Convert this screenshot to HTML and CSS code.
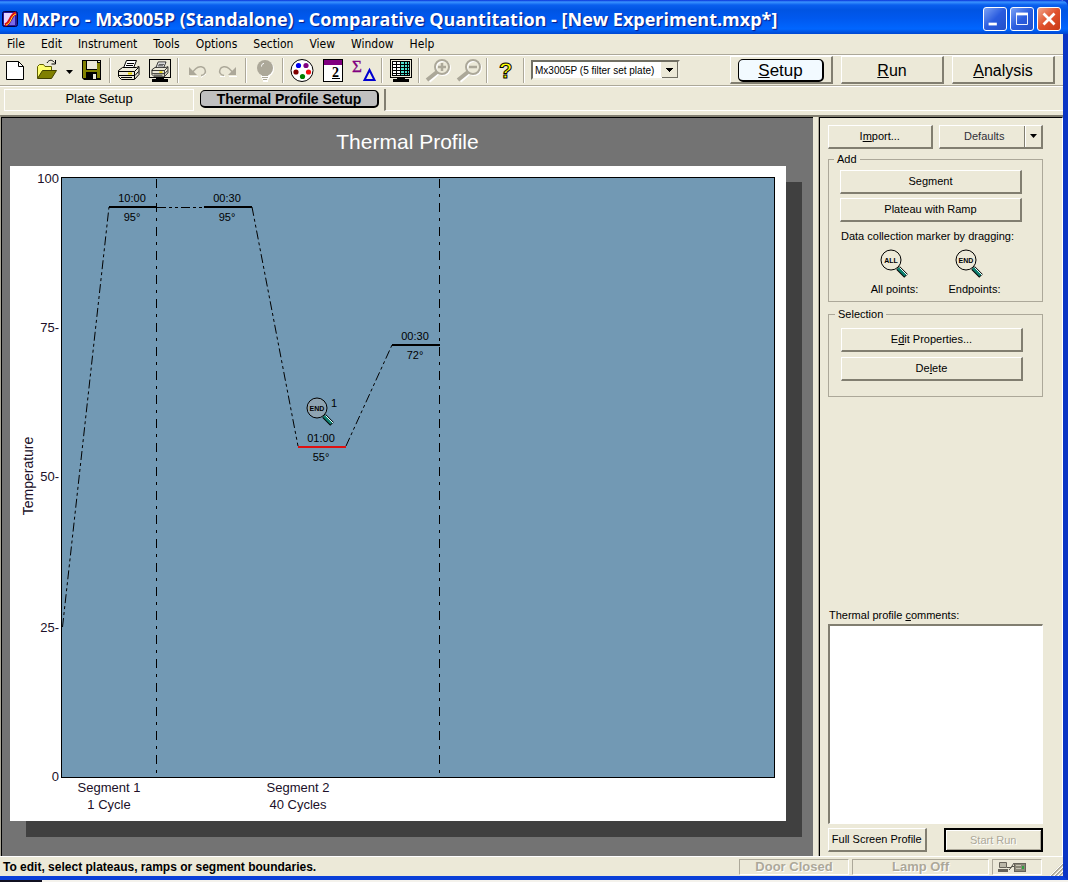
FILE: index.html
```html
<!DOCTYPE html>
<html lang="en">
<head>
<meta charset="utf-8">
<title>MxPro - Mx3005P (Standalone)</title>
<link rel="stylesheet" href="styles.css">
</head>
<body>
<div class="window">
  <header class="titlebar">
    <svg class="app-icon" viewBox="0 0 16 16" aria-hidden="true">
      <rect x=".5" y=".5" width="15" height="15" rx="2" fill="#2a1a9a" stroke="#000040"/>
      <path d="M2 2H12L4 14H2Z" fill="#e4d4ff"/><path d="M13 4V14H7Z" fill="#7a6aea"/>
      <path d="M3 14C9 12 7 5 14 2" stroke="#e01010" stroke-width="3" fill="none"/>
      <path d="M4 14C10 12 8 5 14 3" stroke="#ffe820" stroke-width="1" fill="none"/>
    </svg>
    <h1 class="title">MxPro - Mx3005P (Standalone) - Comparative Quantitation - [New Experiment.mxp*]</h1>
    <div class="caption-buttons">
      <button class="cap" aria-label="Minimize"><svg viewBox="0 0 24 24"><rect x="5" y="16" width="9" height="3" fill="#fff"/></svg></button>
      <button class="cap" aria-label="Maximize"><svg viewBox="0 0 24 24"><path d="M6 6.500H18V18H6Z" fill="none" stroke="#fff"/><rect x="5.500" y="5" width="13" height="3" fill="#fff"/></svg></button>
      <button class="cap cap-close" aria-label="Close"><svg viewBox="0 0 24 24"><path d="M6 6L18 18M18 6L6 18" stroke="#fff" stroke-width="3"/></svg></button>
    </div>
  </header>

  <nav class="menubar">
    <button>File</button><button>Edit</button><button>Instrument</button><button>Tools</button><button>Options</button><button>Section</button><button>View</button><button>Window</button><button>Help</button>
  </nav>

  <div class="toolbar">
    <button class="tool" aria-label="New"><svg viewBox="0 0 25 24"><path d="M3.500 3.500H15.500L20.500 8.500V21.500H3.500Z" fill="#fff" stroke="#000"/><path d="M15.500 3.500V8.500H20.500" fill="none" stroke="#000"/></svg></button>
    <button class="tool" aria-label="Open"><svg viewBox="0 0 25 24"><path d="M3.500 20V8.500L5.500 6.500H9.500L11 8.500H17.500V12" fill="#ffff70" stroke="#606000"/><path d="M3.500 20.500L8.500 12.500H22.500L17.500 20.500Z" fill="#808000" stroke="#404000"/><path d="M13 5C15 1.500 18 1.500 20.500 4.500M21.500 2V6H17.500" fill="none" stroke="#000"/></svg></button>
    <button class="tool tool-drop" aria-label="Recent files"><svg viewBox="0 0 14 24"><path d="M4 12H11L7.500 16Z"/></svg></button>
    <button class="tool" aria-label="Save"><svg viewBox="0 0 25 24"><path d="M3 2H22V22H5L3 20Z" fill="#000"/><rect x="4" y="3" width="3" height="17" fill="#808000"/><rect x="18" y="5" width="3" height="15" fill="#808000"/><rect x="7" y="12" width="12" height="2" fill="#808000"/><rect x="8" y="3" width="10" height="8" fill="#ece9d8"/><rect x="14" y="16" width="3" height="5" fill="#ece9d8"/><rect x="19" y="3" width="2" height="1" fill="#ece9d8"/></svg></button>
    <span class="sep"></span>
    <button class="tool" aria-label="Print"><svg viewBox="0 0 25 24"><use href="#printer"/></svg></button>
    <button class="tool" aria-label="Print preview"><svg viewBox="0 0 25 24"><rect x="2.500" y="1.500" width="21" height="18" fill="#ece9d8" stroke="#000"/><g transform="translate(3 2) scale(.78)"><use href="#printer"/></g><path d="M9 20H17V21H21V24H5V21H9Z"/></svg></button>
    <span class="sep"></span>
    <button class="tool" aria-label="Undo" disabled><svg viewBox="0 0 25 24"><path d="M6 18.500H14M17 19.500L22 16" stroke="#fff"/><g transform="translate(26 0) scale(-1 1)"><use href="#arrow"/></g></svg></button>
    <button class="tool" aria-label="Redo" disabled><svg viewBox="0 0 25 24"><path d="M14 18.500H22M5 18.500H10" stroke="#fff"/><use href="#arrow"/></svg></button>
    <span class="sep"></span>
    <button class="tool" aria-label="Light" disabled><svg viewBox="0 0 25 24"><path d="M9 18.500H18M10 20.500H17M11 23H16" stroke="#fff" stroke-width="2"/><circle cx="14" cy="11" r="8" fill="#fff"/><circle cx="13" cy="10" r="8" fill="#aca899"/><path d="M10 17H16V18H10ZM10 19H16V20H10ZM11 21H15V22H11Z" fill="#aca899"/><path d="M9.500 8.500C9.500 6.500 10.500 5.500 12 5.500" fill="none" stroke="#fff"/></svg></button>
    <span class="sep"></span>
    <button class="tool" aria-label="Plate dyes"><svg viewBox="0 0 25 24"><circle cx="13" cy="12.500" r="11" fill="#fff" stroke="#000"/><circle cx="9.500" cy="7.500" r="2.600" fill="#0000f0"/><circle cx="17" cy="7.500" r="2.600" fill="#800080"/><circle cx="7" cy="14" r="2.600" fill="#800000"/><circle cx="19.500" cy="14" r="2.600" fill="#f01010"/><circle cx="13.500" cy="18.500" r="2.600" fill="#008000"/></svg></button>
    <button class="tool" aria-label="Replicates"><svg viewBox="0 0 25 24"><rect x="3.500" y="1.500" width="19" height="22" fill="#fff" stroke="#000"/><rect x="4" y="2" width="18" height="5" fill="#800080"/><text x="12" y="19" class="ic-two">2</text><path d="M12 20.500H20" stroke="#000"/></svg></button>
    <button class="tool" aria-label="Summary"><svg viewBox="0 0 25 24"><text x="1" y="14" class="ic-sigma">Σ</text><path d="M18.500 12L23.500 22H13.500Z" fill="none" stroke="#0000d0" stroke-width="2"/></svg></button>
    <span class="sep"></span>
    <button class="tool" aria-label="Plate view"><svg viewBox="0 0 25 24"><rect x="2.500" y="1.500" width="21" height="18" fill="#ece9d8" stroke="#000"/><rect x="4" y="3" width="18" height="15" fill="#000"/><rect x="5" y="4" width="16" height="13" fill="#50e0d0"/><rect x="5" y="4" width="8" height="13" fill="#fff"/><path d="M8.500 4V17M12.500 4V17M16.500 4V17M19.500 4V17M5 6.500H21M5 9.500H21M5 12.500H21M5 15.500H21" stroke="#000"/><path d="M9 20H17V21H21V24H5V21H9Z"/></svg></button>
    <span class="sep"></span>
    <button class="tool" aria-label="Zoom in" disabled><svg viewBox="0 0 25 24"><path d="M4 23L13 15" stroke="#fff" stroke-width="4"/><circle cx="18" cy="10" r="7" fill="none" stroke="#fff" stroke-width="2"/><circle cx="17" cy="9" r="7" fill="none" stroke="#aca899" stroke-width="2"/><path d="M13 9H21M17 5V13" stroke="#aca899" stroke-width="2.500"/><path d="M2 22L12 14" stroke="#aca899" stroke-width="4"/></svg></button>
    <button class="tool" aria-label="Zoom out" disabled><svg viewBox="0 0 25 24"><path d="M4 23L13 15" stroke="#fff" stroke-width="4"/><circle cx="18" cy="10" r="7" fill="none" stroke="#fff" stroke-width="2"/><circle cx="17" cy="9" r="7" fill="none" stroke="#aca899" stroke-width="2"/><path d="M13 9H21" stroke="#aca899" stroke-width="2.500"/><path d="M2 22L12 14" stroke="#aca899" stroke-width="4"/></svg></button>
    <span class="sep"></span>
    <button class="tool" aria-label="Help"><svg viewBox="0 0 25 24"><text x="6" y="20" class="ic-help">?</text></svg></button>
    <span class="sep"></span>
    <select class="instrument" aria-label="Instrument"><option>Mx3005P (5 filter set plate)</option></select>
    <div class="modes">
      <button class="mode mode-on"><span class="pill"><u>S</u>etup</span></button>
      <button class="mode"><span><u>R</u>un</span></button>
      <button class="mode"><span><u>A</u>nalysis</span></button>
    </div>
  </div>

  <div class="subtabs">
    <button class="subtab">Plate Setup</button>
    <button class="subtab-on">Thermal Profile Setup</button>
    <span class="subtab-rest"></span>
  </div>

  <main class="work">
    <section class="chart-pane">
      <h2 class="chart-title">Thermal Profile</h2>
      <svg class="sheet" viewBox="0 0 776 655" role="img" aria-label="Thermal profile chart">
        <defs>
          <g id="printer">
            <path d="M7.500 10L10.500 2.500H20.500L17.500 10" fill="#fff" stroke="#000"/>
            <path d="M11 5.500H18M10 7.500H17" stroke="#000"/>
            <path d="M2.500 12.500L6.500 9.500H20.500L23 8.500V16.500L18.500 21.500H5.500L2.500 18.500Z" fill="#ece9d8" stroke="#000"/>
            <path d="M2.500 13.500H18.500V21M18.500 13.500L22.500 9.500M3 17.500H18M19 17.500L22.500 13.500M5 19.500H16" fill="none" stroke="#000"/>
            <path d="M12 15.500H16" stroke="#e0d000" stroke-width="2"/>
          </g>
          <g id="arrow">
            <path d="M9 17.500C5 17 4 14 5 11.500C6 8.500 11 7.500 14 10.500L18 14.500" fill="none" stroke="#aca899" stroke-width="1.500"/>
            <path d="M21 9V17H13Z" fill="#aca899"/>
          </g>
          <g id="handle">
            <path d="M18 19L26 27" stroke="#000" stroke-width="5"/>
            <path d="M18 19L25.500 26.500" stroke="#108070" stroke-width="3"/>
            <path d="M19.500 18.500L27 26" stroke="#e8ffff" stroke-width="1"/>
          </g>
        </defs>
        <rect class="plot" x="51.500" y="11.500" width="713" height="600"/>
        <g class="axis">
          <text x="49" y="17" text-anchor="end">100</text>
          <text x="49" y="166" text-anchor="end">75-</text>
          <text x="49" y="315" text-anchor="end">50-</text>
          <text x="49" y="466" text-anchor="end">25-</text>
          <text x="49" y="615" text-anchor="end">0</text>
          <text x="99" y="626" text-anchor="middle">Segment 1</text>
          <text x="99" y="643" text-anchor="middle">1 Cycle</text>
          <text x="288" y="626" text-anchor="middle">Segment 2</text>
          <text x="288" y="643" text-anchor="middle">40 Cycles</text>
          <text class="axis-name" transform="translate(23 310) rotate(-90)" text-anchor="middle">Temperature</text>
        </g>
        <path class="bound" d="M146.500 13V610M429.500 13V610"/>
        <path class="ramp" d="M52.500 461L99 41M242 41L288 280M336 280L382 179"/>
        <path class="ramp" d="M147 41.500H194"/>
        <path class="plateau" d="M99 41H147M194 41H242M382 179H430"/>
        <path class="plateau chosen" d="M288 281H336"/>
        <g class="marks" text-anchor="middle">
          <text x="122" y="36">10:00</text><text x="122" y="55">95°</text>
          <text x="217" y="36">00:30</text><text x="217" y="55">95°</text>
          <text x="311" y="276">01:00</text><text x="311" y="295">55°</text>
          <text x="405" y="174">00:30</text><text x="405" y="193">72°</text>
          <text x="324" y="241">1</text>
        </g>
        <g transform="translate(296 231)">
          <use href="#handle"/><circle cx="11" cy="11" r="10" fill="#8fa4b2" stroke="#000"/><text class="ic-lens" x="11" y="14">END</text>
        </g>
      </svg>
    </section>

    <aside class="side">
      <div class="row">
        <button class="btn">I<u>m</u>port...</button>
        <button class="btn split"><span class="split-text">Defaults</span><span class="split-arrow"><svg viewBox="0 0 8 4"><path d="M0 0H7L3.500 4Z"/></svg></span></button>
      </div>
      <fieldset class="group add">
        <legend>Add</legend>
        <button class="btn">Segment</button>
        <button class="btn">Plateau with Ramp</button>
        <p class="hint">Data collection marker by dragging:</p>
        <div class="markers">
          <figure class="marker">
            <svg viewBox="0 0 30 30"><use href="#handle"/><circle cx="11" cy="11" r="10" fill="#ece9d8" stroke="#000"/><text class="ic-lens" x="11" y="14">ALL</text></svg>
            <figcaption>All points:</figcaption>
          </figure>
          <figure class="marker">
            <svg viewBox="0 0 30 30"><use href="#handle"/><circle cx="11" cy="11" r="10" fill="#ece9d8" stroke="#000"/><text class="ic-lens" x="11" y="14">END</text></svg>
            <figcaption class="wide">Endpoints:</figcaption>
          </figure>
        </div>
      </fieldset>
      <fieldset class="group selection">
        <legend>Selection</legend>
        <button class="btn">E<u>d</u>it Properties...</button>
        <button class="btn">De<u>l</u>ete</button>
      </fieldset>
      <label class="comments-label" for="comments">Thermal profile <u>c</u>omments:</label>
      <textarea id="comments" class="comments"></textarea>
      <div class="row row-end">
        <button class="btn">Full Screen Profile</button>
        <button class="btn start" disabled>Start Run</button>
      </div>
    </aside>
  </main>

  <footer class="status">
    <span class="status-text">To edit, select plateaus, ramps or segment boundaries.</span>
    <span class="cell door">Door Closed</span>
    <span class="cell lamp">Lamp Off</span>
    <span class="cell link">
      <svg viewBox="0 0 30 12" role="img" aria-label="Instrument connection"><path d="M2.500 1.500H9.500V6.500H2.500Z" fill="#bab7a8" stroke="#66635a"/><path d="M1 8H11V11H1Z" fill="#66635a"/><path d="M10 6.500H14L17 2M12 9L15 5.500H18" fill="none" stroke="#55534a"/><rect x="17.500" y="2.500" width="11" height="8" fill="#8b8878" stroke="#66635a"/><path d="M19 4.500H24M19 7.500H24" stroke="#c8c5b5"/><rect x="25" y="5" width="2" height="3" fill="#30a040"/></svg>
    </span>
    <svg class="grip" viewBox="0 0 14 14" aria-hidden="true"><path d="M2 14L14 2M6 14L14 6M10 14L14 10" stroke="#aca899" stroke-width="2"/><path d="M1 14L14 1M5 14L14 5M9 14L14 9" stroke="#fff"/></svg>
  </footer>
</div>
<div class="behind"><span class="behind-dark"></span></div>
</body>
</html>
```

FILE: styles.css
```css
* { box-sizing: border-box; }

body {
  margin: 0;
  min-height: 100vh;
  display: flex;
  flex-direction: column;
  background: #ece9d8;
  color: #000;
  font-family: "Liberation Sans", Arial, sans-serif;
  font-size: 11px;
}

button, select, textarea { font: inherit; color: inherit; }
button { border: 0; padding: 0; background: none; }
svg { display: block; }

.window {
  flex: 1;
  display: flex;
  flex-direction: column;
  border-right: 5px solid #0a35c4;
  border-bottom: 4px solid #0a3fd8;
}

.titlebar {
  display: flex;
  align-items: center;
  gap: 4px;
  height: 34px;
  margin-right: -5px;
  padding: 4px 7px 0 2px;
  border-radius: 0 7px 0 0;
  background: linear-gradient(#0831d9 0, #3a93ff 2px, #0a5fee 5px, #0054e3 10px, #0058ee 18px, #0066ff 29px, #0047d0 34px);
}
.app-icon { width: 16px; height: 16px; }
.title {
  flex: 1;
  margin: 0;
  color: #fff;
  font: bold 18px/28px "Open Sans", "Noto Sans", sans-serif;
  white-space: nowrap;
  text-shadow: 1px 1px 1px #0a1883;
}
.caption-buttons { display: flex; gap: 3px; }
.cap {
  width: 24px;
  height: 24px;
  border: 1px solid #fff;
  border-radius: 3px;
  background: linear-gradient(135deg, #7ba2f5, #2a5cdf 50%, #2350c8);
}
.cap svg { width: 22px; height: 22px; }
.cap-close { background: linear-gradient(135deg, #f0a58c, #e0512c 50%, #c83a18); }

.menubar {
  display: flex;
  height: 20px;
  font: 12px/20px "DejaVu Sans Condensed", Tahoma, sans-serif;
}
.menubar button { padding: 0 8px; }
.menubar button:first-child { padding-left: 7px; }

.toolbar {
  display: flex;
  align-items: center;
  height: 32px;
  border-top: 1px solid #aca899;
  border-bottom: 1px solid #aca899;
  box-shadow: inset 0 1px #fff, 0 1px #fff;
}
.tool { width: 31px; height: 24px; padding: 0 3px; flex: none; }
.tool svg { width: 25px; height: 24px; overflow: visible; }
.tool-drop { width: 14px; padding: 0; }
.tool-drop svg { width: 14px; }
.sep {
  flex: none;
  width: 2px;
  height: 25px;
  margin: 0 2px;
  border-left: 1px solid #aca899;
  border-right: 1px solid #fff;
}
.ic-two { font: bold 14px "Liberation Serif", serif; }
.ic-sigma { font: 17px "Liberation Serif", serif; fill: #800080; stroke: #800080; stroke-width: .3px; }
.ic-help { font: bold 22px "Liberation Sans", sans-serif; fill: #ff0; stroke: #000; stroke-width: 1px; }
.ic-lens { font: bold 7px "Liberation Sans", sans-serif; text-anchor: middle; }

.instrument {
  appearance: none;
  width: 149px;
  height: 20px;
  margin-left: 4px;
  padding: 0 18px 0 2px;
  border: 2px solid;
  border-color: #716f64 #f1efe2 #f1efe2 #716f64;
  border-radius: 0;
  font-size: 10px;
  background:
    linear-gradient(#000, #000) right 8px top 9px / 1px 1px no-repeat,
    linear-gradient(#000, #000) right 7px top 8px / 3px 1px no-repeat,
    linear-gradient(#000, #000) right 6px top 7px / 5px 1px no-repeat,
    linear-gradient(#000, #000) right 5px top 6px / 7px 1px no-repeat,
    linear-gradient(#ece9d8, #ece9d8) right 1px top 0 / 16px 15px no-repeat,
    linear-gradient(#716f64, #716f64) right 0 top 0 / 16px 16px no-repeat,
    #fff;
}

.modes { display: flex; gap: 8px; margin: 0 8px 0 auto; align-self: stretch; padding: 1px 0; }
.mode {
  display: flex;
  align-items: center;
  justify-content: center;
  width: 103px;
  padding-top: 2px;
  border: solid;
  border-width: 1px 2px 2px 1px;
  border-color: #fff #817e70 #817e70 #fff;
  font-size: 16px;
  line-height: 20px;
}
.mode-on { padding-top: 1px; font-size: 17px; }
.pill {
  width: 86px;
  padding-top: 1px;
  border: 1px solid #000;
  border-right-width: 2px;
  border-bottom-width: 2px;
  border-radius: 5px;
  background: #f2faff;
  line-height: 19px;
}

.subtabs { display: flex; height: 29px; padding: 3px 0 4px 4px; }
.subtab {
  width: 190px;
  height: 22px;
  border: 1px solid #fff;
  font-size: 13px;
  line-height: 16px;
  padding-bottom: 2px;
}
.subtab-on {
  width: 179px;
  height: 18px;
  margin: 1px 0 0 6px;
  padding-top: 1px;
  border: 1px solid #000;
  border-right-width: 2px;
  border-bottom-width: 2px;
  border-radius: 5px;
  background: #c0c0c0;
  font-size: 14px;
  font-weight: bold;
  line-height: 14px;
}
.subtab-rest {
  flex: 1;
  height: 22px;
  margin-left: 5px;
  border-left: 2px solid #817e70;
  border-bottom: 1px solid #fff;
}

.work {
  flex: 1;
  display: flex;
  border-top: 2px solid #817e70;
  border-left: 1px solid #aca899;
}
.chart-pane {
  flex: 1;
  min-width: 0;
  padding: 12px 27px 34px 8px;
  border-top: 1px solid #000;
  border-left: 1px solid #000;
  background: #737373;
}
.chart-title {
  margin: 0 -19px 12px 0;
  color: #fff;
  font-size: 21px;
  font-weight: normal;
  line-height: 24px;
  text-align: center;
}
.sheet { width: 100%; background: #fff; box-shadow: 16px 16px #404040; }
.plot { fill: #7299b4; stroke: #000; }
.axis { font-size: 13px; fill: #201028; }
.axis-name { font-size: 14px; }
.marks { font-size: 11px; }
.bound, .ramp { fill: none; stroke: #000; }
.bound { stroke-dasharray: 9 6 3 6; }
.ramp { stroke-dasharray: 9 3 3 3 3 3; }
.plateau { stroke: #000; stroke-width: 2; }
.chosen { stroke: #e01010; }

.side {
  flex: none;
  width: 244px;
  display: flex;
  flex-direction: column;
  margin-left: 6px;
  padding: 7px 19px 4px 8px;
  border-top: 1px solid #000;
  border-right: 1px solid #fff;
  border-left: 1px solid #000;
  box-shadow: -1px 0 #aca899;
}
.row { display: flex; gap: 6px; }
.row .btn { flex: 1; }
.btn {
  display: block;
  height: 24px;
  border: solid;
  border-width: 1px 2px 2px 1px;
  border-color: #fff #817e70 #817e70 #fff;
  background: #ece9d8;
  line-height: 21px;
  text-align: center;
  white-space: nowrap;
}
.row .split { display: flex; }
.split-text { flex: 1; padding-left: 5px; color: #303038; }
.split-arrow {
  width: 17px;
  padding: 8px 0 0 5px;
  border-left: 1px solid #817e70;
  box-shadow: inset 1px 0 #fff;
}
.split-arrow svg { width: 8px; height: 4px; }

.group {
  min-width: 0;
  margin: 0;
  border: 1px solid #aca899;
}
.group legend { margin-left: -6px; padding: 0 3px; line-height: 12px; }
.group .btn { width: 100%; }
.add { margin-top: 4px; padding: 5px 20px 7px 11px; height: 149px; }
.add .btn + .btn { margin-top: 4px; }
.selection { margin-top: 6px; padding: 8px 19px 15px 12px; height: 89px; }
.selection .btn + .btn { margin-top: 5px; }
.hint { margin: 7px 0 0 1px; line-height: 14px; white-space: nowrap; }
.markers { display: flex; margin: 6px 0 0 17px; }
.marker { width: 75px; margin: 0; text-align: center; }
.marker svg { width: 30px; height: 30px; margin: 0 auto; }
.marker figcaption { margin-top: 3px; line-height: 14px; }
.marker .wide { padding-left: 10px; }

.comments-label { margin: auto 0 2px 1px; line-height: 13px; }
.comments {
  display: block;
  width: 100%;
  height: 200px;
  margin-bottom: 4px;
  padding: 2px;
  border: solid;
  border-width: 2px 1px 1px 2px;
  border-color: #817e70 #fff #fff #817e70;
  border-radius: 0;
  background: #fff;
  resize: none;
}
.row-end { gap: 17px; }
.start { border: 2px solid #000; line-height: 18px; box-shadow: inset 1px 1px #fff, inset -1px -1px #aca899; color: #aca899; text-shadow: 1px 1px #fff; }

.status {
  display: flex;
  align-items: center;
  gap: 3px;
  height: 20px;
  padding-left: 3px;
  border-top: 1px solid #fff;
  font-size: 12px;
  font-weight: bold;
}
.status-text { flex: 1; }
.cell {
  height: 16px;
  border: 1px solid;
  border-color: #aca899 #fff #fff #aca899;
  color: #aca899;
  font-size: 13px;
  line-height: 14px;
  text-align: center;
  text-shadow: 1px 1px #fff;
}
.door { width: 110px; }
.lamp { width: 137px; }
.link { width: 50px; padding: 1px 4px; }
.link svg { width: 30px; height: 12px; }
.grip { width: 14px; height: 14px; margin-left: 4px; align-self: flex-end; }

.behind { height: 2px; background: #f4f2ec; }
.behind-dark { display: block; width: 42px; height: 2px; background: #101020; }
```
